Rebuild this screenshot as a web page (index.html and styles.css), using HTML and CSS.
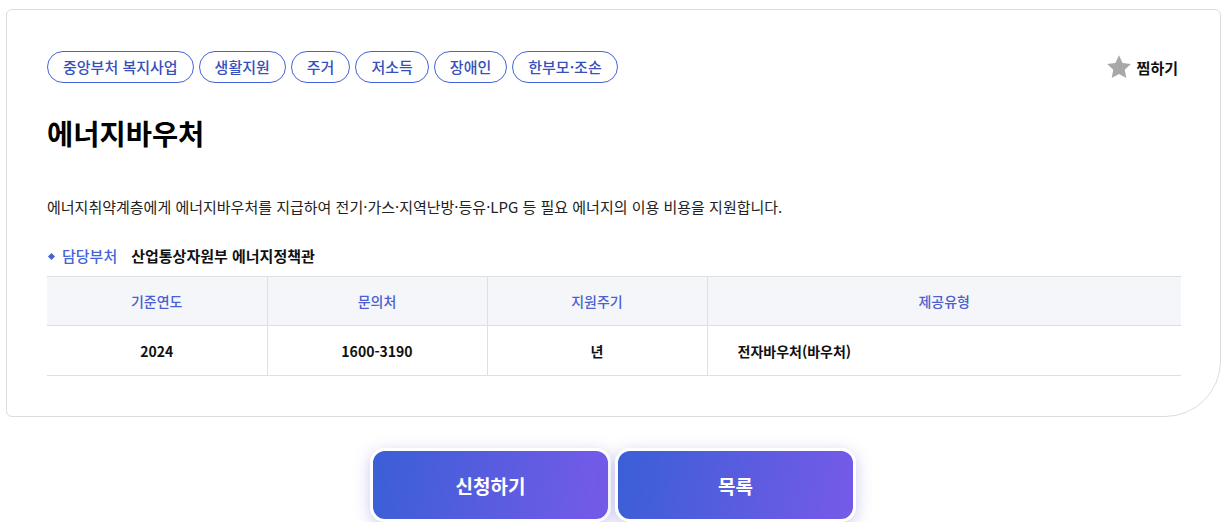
FILE: index.html
```html
<!DOCTYPE html>
<html lang="ko">
<head>
    <meta charset="UTF-8">
    <meta name="viewport" content="width=device-width, initial-scale=1.0">
    <title>에너지바우처</title>
    <link rel="stylesheet" href="styles.css">
</head>
<body>
    <div class="card">
        <div class="top-row">
            <ul class="tags">
                <li>중앙부처 복지사업</li>
                <li>생활지원</li>
                <li>주거</li>
                <li>저소득</li>
                <li>장애인</li>
                <li>한부모·조손</li>
            </ul>
            <button class="like">
                <svg width="28" height="27" viewBox="0 0 24 24"><path d="M12 1.2l3.2 6.7 7.3 1-5.4 5.1 1.4 7.3L12 17.8l-6.5 3.5 1.4-7.3-5.4-5.1 7.3-1z" fill="#a8a8a8"/></svg>
                찜하기
            </button>
        </div>
        <h1>에너지바우처</h1>
        <p class="desc">에너지취약계층에게 에너지바우처를 지급하여 전기·가스·지역난방·등유·LPG 등 필요 에너지의 이용 비용을 지원합니다.</p>
        <div class="dept">
            <span class="dept-label">담당부처</span>
            <span class="dept-name">산업통상자원부 에너지정책관</span>
        </div>
        <table class="info">
            <colgroup>
                <col class="narrow">
                <col class="narrow">
                <col class="narrow">
                <col>
            </colgroup>
            <thead>
                <tr>
                    <th>기준연도</th>
                    <th>문의처</th>
                    <th>지원주기</th>
                    <th>제공유형</th>
                </tr>
            </thead>
            <tbody>
                <tr>
                    <td>2024</td>
                    <td>1600-3190</td>
                    <td>년</td>
                    <td class="left">전자바우처(바우처)</td>
                </tr>
            </tbody>
        </table>
    </div>
    <div class="actions">
        <button class="btn">신청하기</button>
        <button class="btn">목록</button>
    </div>
</body>
</html>
```

FILE: styles.css
```css
body {
    margin: 0;
    background-color: white;
    font-family: "Noto Sans CJK KR", "Noto Sans", sans-serif;
    color: #111;
}

.card {
    margin: 9px 0 0 6px;
    width: 1215px;
    box-sizing: border-box;
    height: 408px;
    padding: 41px 40px 0 40px;
    border: 1px solid #dcdcdc;
    border-radius: 6px 6px 56px 6px;
}

.top-row {
    display: flex;
    justify-content: space-between;
    align-items: center;
}

.tags {
    display: flex;
    gap: 5px;
    list-style: none;
    margin: 0;
    padding: 0;
}

.tags li {
    height: 32px;
    box-sizing: border-box;
    padding: 0 15px;
    border: 1px solid #4463d8;
    border-radius: 16px;
    color: #3650bd;
    font-size: 15px;
    font-weight: 500;
    line-height: 29px;
}

.like {
    display: flex;
    align-items: center;
    gap: 4px;
    margin-right: 2px;
    padding: 0;
    border: none;
    background: none;
    font-family: inherit;
    font-size: 15px;
    font-weight: 700;
    color: #111;
}

h1 {
    margin: 28px 0 0 0;
    font-size: 28.5px;
    font-weight: 700;
    line-height: 44px;
    color: #000;
}

.desc {
    margin: 40px 0 0 0;
    font-size: 15px;
    line-height: 24px;
    color: #222;
}

.dept {
    margin-top: 25px;
    font-size: 15px;
    line-height: 24px;
    display: flex;
    align-items: center;
}

.dept-label {
    position: relative;
    padding-left: 15px;
    color: #4463d8;
    font-weight: 500;
    margin-right: 14px;
}

.dept-label::before {
    content: "";
    position: absolute;
    left: 2px;
    top: 10px;
    width: 5px;
    height: 5px;
    background: #4463d8;
    transform: rotate(45deg);
}

.dept-name {
    font-weight: 700;
    color: #111;
}

.info {
    margin-top: 8px;
    width: 1134px;
    table-layout: fixed;
    border-collapse: collapse;
    font-size: 14px;
}

.info col.narrow {
    width: 220px;
}

.info th {
    height: 48px;
    padding: 0;
    background: #f5f6fa;
    color: #4b5fd1;
    font-weight: 500;
    border-top: 1px solid #dedfe4;
    border-bottom: 1px solid #dedfe4;
    border-left: 1px solid #dedfe4;
}

.info td {
    height: 49px;
    padding: 0;
    text-align: center;
    font-weight: 700;
    color: #111;
    border-bottom: 1px solid #dedfe4;
    border-left: 1px solid #dedfe4;
}

.info th:first-child,
.info td:first-child {
    border-left: none;
}

.info td.left {
    text-align: left;
    padding-left: 30px;
}

.actions {
    display: flex;
    justify-content: center;
    gap: 4px;
    margin-top: 31px;
    padding-right: 6px;
}

.btn {
    width: 241px;
    height: 74px;
    padding: 0;
    border: 3px solid white;
    border-radius: 15px;
    background: linear-gradient(100deg, #3a5fd6, #765ae9);
    box-shadow: 0 4px 16px rgba(110, 100, 210, 0.35);
    color: white;
    font-family: inherit;
    font-size: 19px;
    font-weight: 700;
    cursor: pointer;
}
```
